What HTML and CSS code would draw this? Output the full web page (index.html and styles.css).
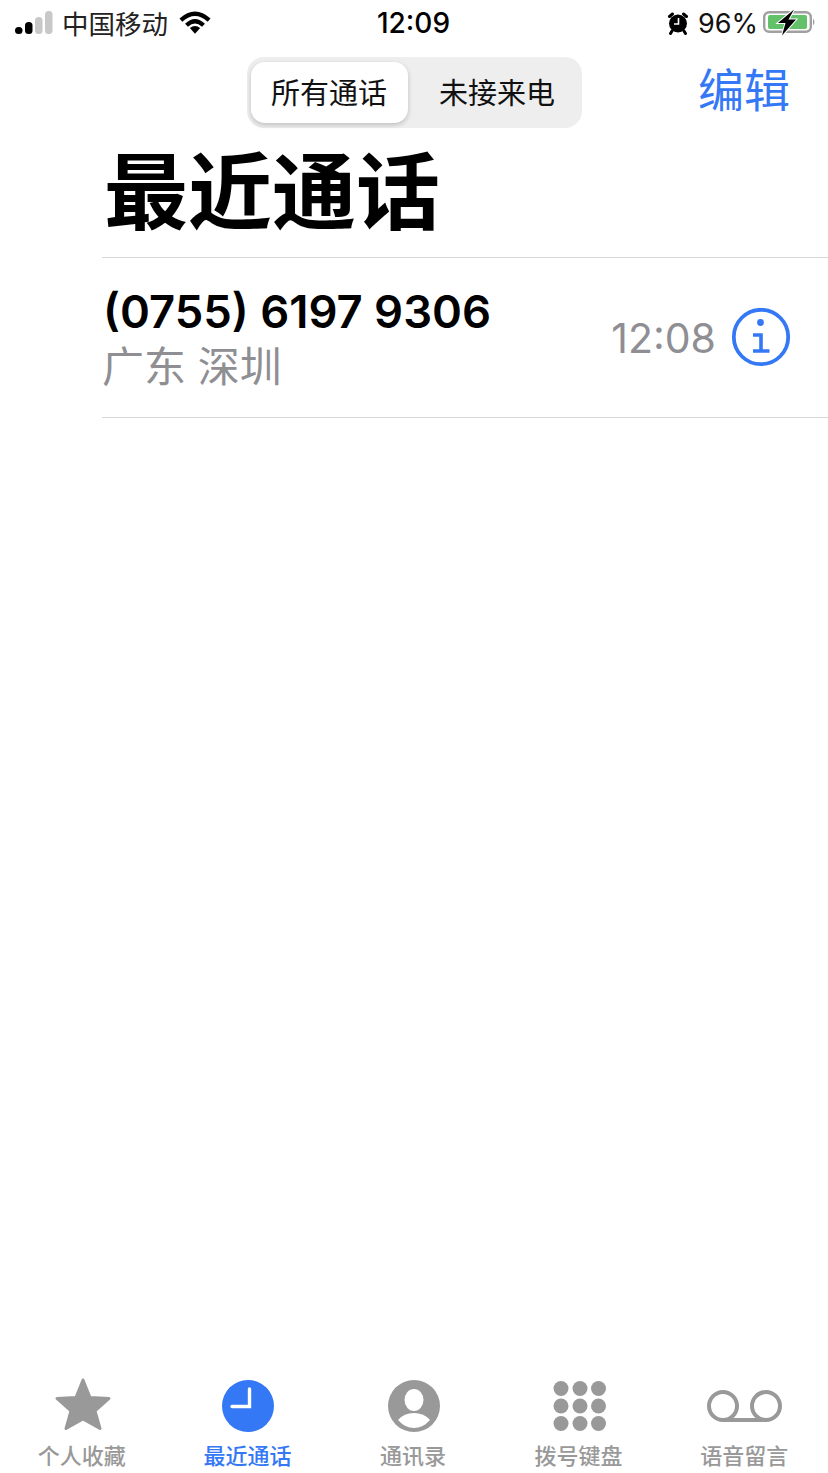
FILE: index.html
```html
<!DOCTYPE html>
<html lang="zh-CN">
<head>
  <meta charset="UTF-8">
  <meta name="viewport" content="width=device-width, initial-scale=1.0">
  <title>最近通话</title>
  <link rel="stylesheet" href="styles.css">
</head>
<body>
  <div class="page">
    <div class="status-bar">
      <div class="status-left">
        <svg class="signal" width="38" height="24" viewBox="0 0 38 24">
          <rect x="0" y="16" width="7.500" height="7" rx="3.500" fill="#000"/>
          <rect x="10" y="11" width="7.500" height="12" rx="3.500" fill="#000"/>
          <rect x="20" y="6" width="7.500" height="17" rx="3.500" fill="#c8c8c8"/>
          <rect x="30" y="0" width="7.500" height="23" rx="3.500" fill="#c8c8c8"/>
        </svg>
        <span class="carrier">中国移动</span>
        <svg class="wifi" width="32" height="24" viewBox="0 0 34 25">
          <path d="M17 25 L11.500 19 Q17 14.500 22.500 19 Z" fill="#000"/>
          <path d="M2 10.500 Q17 -3 32 10.500" fill="none" stroke="#000" stroke-width="4.500"/>
          <path d="M8 16 Q17 7.500 26 16" fill="none" stroke="#000" stroke-width="4.500"/>
        </svg>
      </div>
      <div class="status-time">12:09</div>
      <div class="status-right">
        <svg class="alarm" width="22" height="24" viewBox="0 0 22 24">
          <circle cx="11" cy="12.500" r="9" fill="#000"/>
          <path d="M2.500 5.500 L5.500 3 M16.500 3 L19.500 5.500 M5 20 L3.500 22.500 M17 20 L18.500 22.500" stroke="#000" stroke-width="3" stroke-linecap="round" fill="none"/>
          <path d="M11.500 7 V13 H7" stroke="#fff" stroke-width="1.600" fill="none"/>
        </svg>
        <span class="battery-pct">96%</span>
        <svg class="battery" width="53" height="28" viewBox="0 0 53 28">
          <rect x="1.200" y="3.200" width="46.600" height="19.600" rx="5" fill="none" stroke="#a0a0a0" stroke-width="2.400"/>
          <rect x="5" y="6" width="39" height="14" rx="2" fill="#62c169"/>
          <path d="M50 9.500 Q53 13 50 16.500 Z" fill="#a0a0a0"/>
          <path d="M31 0.500 L15 14 H22.500 L19 26.500 L33 10.500 H25.500 Z" fill="#000" stroke="#fff" stroke-width="2" paint-order="stroke"/>
        </svg>
      </div>
    </div>

    <div class="nav-bar">
      <div></div>
      <div class="segments">
        <div class="segment active">所有通话</div>
        <div class="segment">未接来电</div>
      </div>
      <a class="edit-link">编辑</a>
    </div>

    <h1 class="title">最近通话</h1>

    <div class="call-list">
      <div class="call-row">
        <div class="call-info">
          <div class="call-number">(0755) 6197 9306</div>
          <div class="call-place">广东 深圳</div>
        </div>
        <div class="call-time">12:08</div>
        <svg class="info-icon" width="60" height="60" viewBox="0 0 60 60">
          <circle cx="30" cy="29" r="27.200" fill="none" stroke="#3478f6" stroke-width="3.800"/>
          <circle cx="29.500" cy="14.500" r="3.400" fill="#3478f6"/>
          <path d="M22 27 H30 V43 M22 43 H38.500" fill="none" stroke="#3478f6" stroke-width="3.600"/>
        </svg>
      </div>
    </div>

    <div class="tab-bar">
      <div class="tab">
        <svg width="60" height="56" viewBox="0 0 60 56">
          <path d="M30 2 L37 19.500 L56 20.500 L42 33 L47 50.500 L30 41 L13 50.500 L18 33 L4 20.500 L23 19.500 Z" fill="#999" stroke="#999" stroke-width="3" stroke-linejoin="round"/>
        </svg>
        <span>个人收藏</span>
      </div>
      <div class="tab current">
        <svg width="60" height="56" viewBox="0 0 60 56">
          <circle cx="30" cy="28" r="26" fill="#3478f6"/>
          <path d="M31.500 11 V28.500 H14" fill="none" stroke="#fff" stroke-width="3.400" stroke-linecap="round"/>
        </svg>
        <span>最近通话</span>
      </div>
      <div class="tab">
        <svg width="60" height="56" viewBox="0 0 60 56">
          <circle cx="30" cy="28" r="26" fill="#999"/>
          <ellipse cx="30" cy="22" rx="9.500" ry="11" fill="#fff"/>
          <path d="M14 42 Q20 35 30 35 Q40 35 46 42 Q39 50 30 50 Q21 50 14 42 Z" fill="#fff"/>
        </svg>
        <span>通讯录</span>
      </div>
      <div class="tab">
        <svg width="60" height="56" viewBox="0 0 60 56">
          <g fill="#999">
            <circle cx="11" cy="10.500" r="7.500"/><circle cx="30" cy="10.500" r="7.500"/><circle cx="48.500" cy="10.500" r="7.500"/>
            <circle cx="11" cy="28" r="7.500"/><circle cx="30" cy="28" r="7.500"/><circle cx="48.500" cy="28" r="7.500"/>
            <circle cx="11" cy="45.500" r="7.500"/><circle cx="30" cy="45.500" r="7.500"/><circle cx="48.500" cy="45.500" r="7.500"/>
          </g>
        </svg>
        <span>拨号键盘</span>
      </div>
      <div class="tab">
        <svg width="76" height="56" viewBox="0 0 76 56">
          <circle cx="16" cy="28" r="14" fill="none" stroke="#999" stroke-width="4"/>
          <circle cx="59" cy="28" r="14" fill="none" stroke="#999" stroke-width="4"/>
          <path d="M16 42 H59" fill="none" stroke="#999" stroke-width="4"/>
        </svg>
        <span>语音留言</span>
      </div>
    </div>
  </div>
</body>
</html>
```

FILE: styles.css
```css
* {
  box-sizing: border-box;
}
body {
  margin: 0;
  background-color: #fff;
  color: #000;
  font-family: Inter, "Noto Sans CJK SC", sans-serif;
}
.page {
  display: flex;
  flex-direction: column;
  height: 1473px;
  overflow: hidden;
}
.status-bar {
  display: grid;
  grid-template-columns: 1fr auto 1fr;
  align-items: center;
  height: 46px;
  padding: 0 12px 0 15px;
}
.status-left {
  display: flex;
  align-items: center;
  gap: 9px;
}
.carrier {
  padding-bottom: 2px;
  font-size: 26.500px;
  color: #222;
}
.wifi {
  margin: 0 0 2px 2px;
}
.status-time {
  font-size: 28px;
  font-weight: 500;
  margin-right: 4px;
}
.status-right {
  display: flex;
  align-items: center;
  justify-content: flex-end;
  gap: 9px;
}
.battery-pct {
  margin-right: -4px;
  font-size: 27px;
  color: #111;
}
.nav-bar {
  display: grid;
  grid-template-columns: 1fr auto 1fr;
  align-items: center;
  margin-top: 11px;
  height: 71px;
}
.segments {
  display: flex;
  width: 335px;
  height: 71px;
  padding: 5px 4px;
  border-radius: 17px;
  background-color: #eeeeee;
}
.segment {
  flex: 1;
  display: flex;
  align-items: center;
  justify-content: center;
  padding: 0 0 4px 5px;
  font-size: 29px;
  color: #111;
}
.segment.active {
  flex: none;
  width: 157px;
  padding-left: 0;
  border-radius: 14px;
  background-color: #fff;
  box-shadow: 0 2px 5px rgba(0, 0, 0, 0.2);
  margin-right: 4px;
}
.edit-link {
  justify-self: end;
  padding: 0 38px 5px 0;
  font-size: 46px;
  line-height: 60px;
  color: #3478f6;
}
.title {
  margin: 0 0 0 104px;
  height: 129px;
  padding-top: 13px;
  font-size: 84px;
  line-height: 104px;
  font-weight: 700;
}
.call-list {
  flex: 1;
  margin-left: 102px;
}
.call-row {
  display: flex;
  align-items: center;
  height: 161px;
  padding-right: 37px;
  border-top: 1px solid #d8d8d8;
  border-bottom: 1px solid #d8d8d8;
}
.call-info {
  flex: 1;
}
.call-number {
  margin-left: 1px;
  font-size: 45.400px;
  line-height: 58px;
  font-weight: 600;
}
.call-place {
  font-size: 42px;
  line-height: 52px;
  color: #8e8e93;
}
.call-time {
  margin-right: 15px;
  font-size: 41px;
  color: #8e8e93;
}
.tab-bar {
  display: grid;
  grid-template-columns: repeat(5, 1fr);
  height: 95px;
}
.tab {
  display: flex;
  flex-direction: column;
  align-items: center;
  color: #999;
  font-size: 22px;
  line-height: 30px;
}
.tab svg {
  margin-bottom: 7px;
}
.tab span {
  margin-right: 2px;
  font-weight: 500;
}
.tab.current {
  color: #3478f6;
}
```
